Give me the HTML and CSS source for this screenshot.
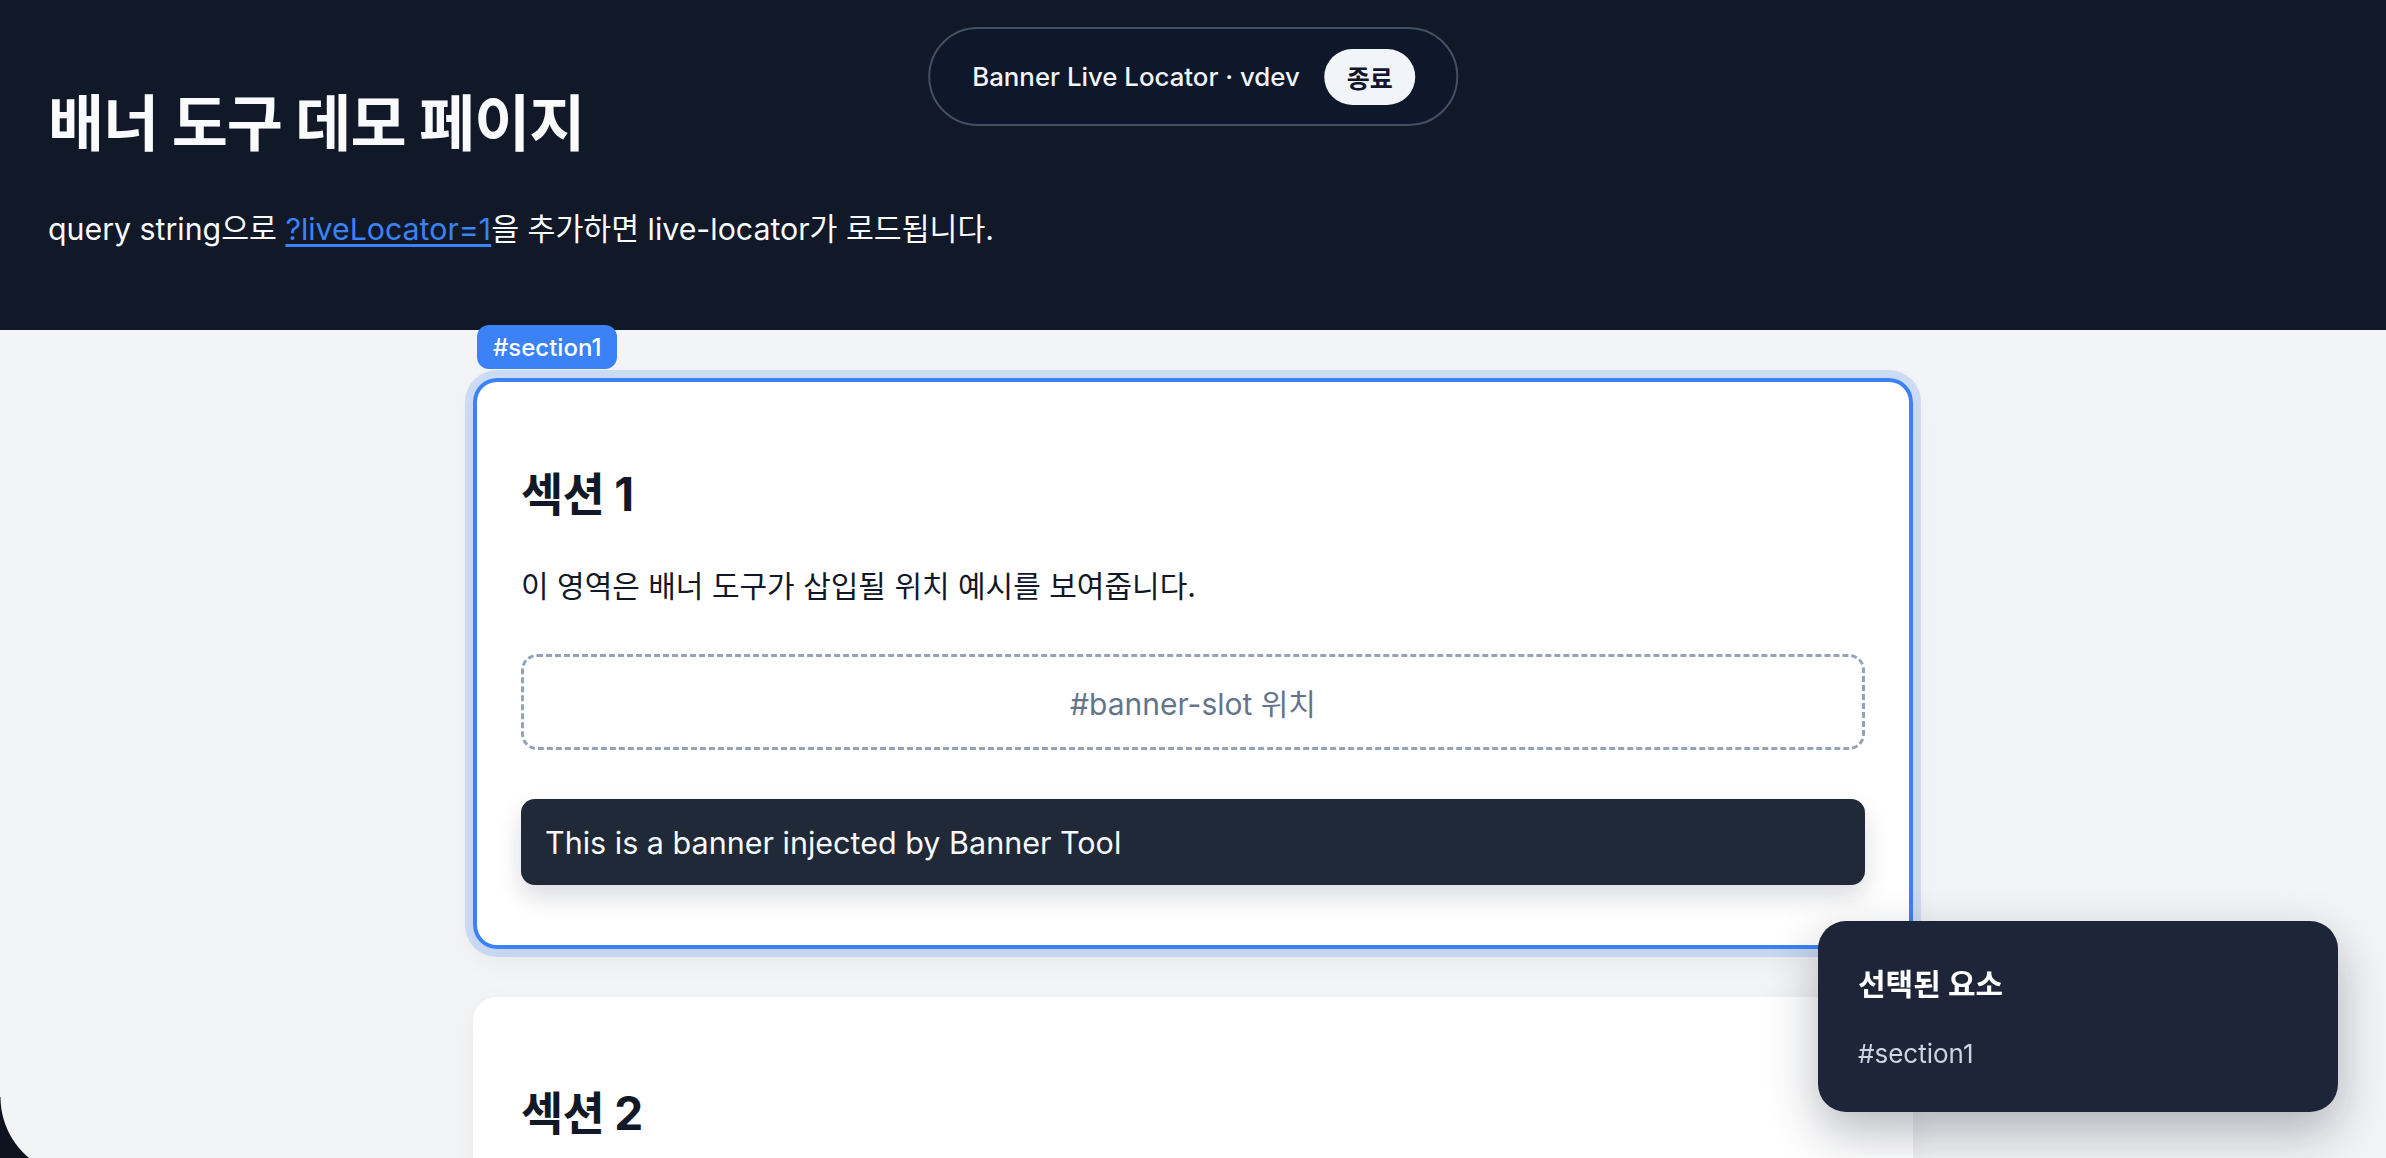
FILE: index.html
```html
<!DOCTYPE html>
<html lang="ko">
<head>
<meta charset="utf-8">
<title>배너 도구 데모 페이지</title>
<link rel="stylesheet" href="styles.css">
</head>
<body>
  <header class="hero">
    <h1 class="hero-title">배너 도구 데모 페이지</h1>
    <p class="hero-sub">query string으로 <a class="hero-link" href="#">?liveLocator=1</a>을 추가하면 live-locator가 로드됩니다.</p>
  </header>

  <main class="content">
    <section class="card card-selected" id="section1">
      <span class="locator-badge">#section1</span>
      <h2 class="card-title">섹션 1</h2>
      <p class="card-text">이 영역은 배너 도구가 삽입될 위치 예시를 보여줍니다.</p>
      <div class="slot"><span class="slot-label">#banner-slot 위치</span></div>
      <div class="banner">This is a banner injected by Banner Tool</div>
    </section>

    <section class="card" id="section2">
      <h2 class="card-title">섹션 2</h2>
      <p class="card-text">두 번째 섹션의 예시 콘텐츠입니다.</p>
    </section>
  </main>

  <div class="locator-bar">
    <span class="locator-label">Banner Live Locator · vdev</span>
    <button class="locator-close" type="button">종료</button>
  </div>

  <aside class="locator-panel">
    <h3 class="panel-title">선택된 요소</h3>
    <p class="panel-value">#section1</p>
  </aside>

  <div class="window-corner"></div>
</body>
</html>
```

FILE: styles.css
```css
* {
  box-sizing: border-box;
}

html,
body {
  height: 100%;
}

body {
  margin: 0;
  overflow: hidden;
  background: #f3f4f6;
  font-family: Inter, "Noto Sans CJK KR", sans-serif;
  color: #111827;
}

/* Header */
.hero {
  height: 330px;
  padding: 88px 48px 0;
  background: #111827;
  color: #f9fafb;
}

.hero-title {
  margin: 0;
  font-size: 61px;
  line-height: 72px;
  font-weight: 700;
  letter-spacing: -1px;
}

.hero-sub {
  margin: 47px 0 0;
  font-size: 30.3px;
  line-height: 45px;
}

.hero-link {
  color: #3b82f6;
  text-decoration: underline;
  text-underline-offset: 4px;
}

/* Content */
.content {
  display: flex;
  flex-direction: column;
  align-items: center;
  gap: 48px;
  padding: 48px 0;
}

.card {
  position: relative;
  width: 1440px;
  padding: 89px 48px 64px;
  background: #ffffff;
  border-radius: 24px;
  box-shadow: 0 10px 30px rgba(15, 23, 42, 0.05);
}

.card-selected {
  box-shadow: inset 0 0 0 4px #3b82f6, 0 0 0 8px rgba(59, 130, 246, 0.2), 0 10px 30px rgba(15, 23, 42, 0.06);
}

.locator-badge {
  position: absolute;
  left: 4px;
  top: -53px;
  height: 44px;
  display: flex;
  align-items: center;
  padding: 0 16px;
  background: #3b82f6;
  color: #ffffff;
  border-radius: 12px;
  font-size: 24px;
  font-weight: 500;
}

.card-title {
  margin: 0;
  font-size: 46px;
  line-height: 54px;
  font-weight: 700;
  letter-spacing: -0.8px;
  color: #111827;
}

.card-text {
  margin: 43px 0 0;
  font-size: 30px;
  line-height: 44px;
  color: #111827;
}

.slot {
  margin-top: 46px;
  height: 96px;
  display: flex;
  align-items: center;
  justify-content: center;
  border: 3px dashed #94a3b8;
  border-radius: 16px;
  font-size: 30px;
  color: #64748b;
}

.banner {
  margin-top: 49px;
  height: 86px;
  display: flex;
  align-items: center;
  padding: 0 24px;
  background: #1f2937;
  color: #f9fafb;
  border-radius: 14px;
  font-size: 30.5px;
  box-shadow: 0 12px 24px rgba(15, 23, 42, 0.15);
}

/* Locator bar */
.locator-bar {
  position: fixed;
  top: 27px;
  left: 50%;
  transform: translateX(-50%);
  height: 99px;
  display: flex;
  align-items: center;
  gap: 25px;
  padding: 0 41px 0 42px;
  background: #0f172a;
  border: 2px solid #445064;
  border-radius: 999px;
  color: #f1f5f9;
  font-size: 25.8px;
  font-weight: 500;
  white-space: nowrap;
}

.locator-close {
  height: 56px;
  padding: 0 22px;
  border: 0;
  border-radius: 999px;
  background: #f1f5f9;
  color: #0f172a;
  font-family: inherit;
  font-size: 25px;
  font-weight: 700;
}

/* Selected element panel */
.locator-panel {
  position: fixed;
  right: 48px;
  bottom: 46px;
  width: 520px;
  height: 191px;
  padding: 45px 40px 0;
  background: #1e2538;
  border-radius: 28px;
  color: #ffffff;
  box-shadow: 0 20px 50px rgba(15, 23, 42, 0.3);
}

.panel-title {
  margin: 0;
  font-size: 30px;
  line-height: 36px;
  font-weight: 700;
}

.panel-value {
  margin: 36px 0 0;
  font-size: 26px;
  line-height: 32px;
  color: #cbd5e1;
}

.window-corner {
  position: fixed;
  left: 0;
  bottom: -19px;
  width: 80px;
  height: 80px;
  background: radial-gradient(circle 80px at 100% 0, transparent 79px, #0f1320 80px);
  pointer-events: none;
}
```
